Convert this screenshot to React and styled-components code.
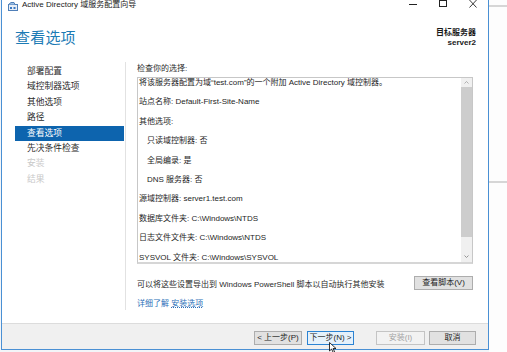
import React from "react";
import styled, { createGlobalStyle } from "styled-components";

const GlobalStyle = createGlobalStyle`
  html, body {
    margin: 0;
    padding: 0;
    background: #fbfbfb;
    overflow: hidden;
  }
  #root {
    width: 507px;
    height: 352px;
  }
`;

const FONT = `"Liberation Sans", "Noto Sans CJK SC", sans-serif`;

const Screen = styled.div`
  position: relative;
  display: flex;
  width: 507px;
  height: 352px;
  background: #f3f5f8;
  font-family: ${FONT};
  color: #1e1e1e;
`;

const Window = styled.div`
  box-sizing: border-box;
  margin-left: 1px;
  width: 488px;
  height: 350px;
  display: flex;
  flex-direction: column;
  background: #ffffff;
  border: 1px solid #4a90d4;
  border-top: none;
`;

const Backdrop = styled.div`
  flex: 1;
  background: #fdfdfd;
  border-top: 2px solid transparent;
  display: flex;
  flex-direction: column;
`;

const BackLine = styled.div`
  height: ${(p) => p.$h}px;
  border-bottom: 2px solid #d6d6d6;
  background: ${(p) => p.$bg || "#fdfdfd"};
`;

const TitleBar = styled.div`
  height: 21px;
  display: flex;
  align-items: flex-start;
  padding-left: 6px;
`;

const TitleText = styled.span`
  font-size: 8px;
  line-height: 10px;
  margin-left: 3px;
  color: #1a1a1a;
  flex: 1;
`;

const Caption = styled.div`
  width: 30px;
  height: 9px;
  display: flex;
  justify-content: center;
  align-items: flex-start;
`;

const Header = styled.div`
  height: 39px;
  display: flex;
  justify-content: space-between;
  padding: 0 12px 0 13px;
`;

const PageTitle = styled.div`
  margin-top: 9px;
  font-size: 15px;
  line-height: 16px;
  color: #1c7bb5;
  letter-spacing: 0.2px;
`;

const Target = styled.div`
  margin-top: 7px;
  text-align: right;
  font-size: 8px;
  line-height: 10px;
  font-weight: bold;
  color: #1a1a1a;
`;

const Body = styled.div`
  height: 263px;
  display: flex;
`;

const Nav = styled.div`
  width: 109px;
  padding: 4px 0 0 13px;
  flex-shrink: 0;
`;

const NavItem = styled.div`
  height: 15.4px;
  line-height: 15.4px;
  padding-left: 12px;
  font-size: 8.75px;
  color: ${(p) => (p.$active ? "#ffffff" : p.$disabled ? "#c9c9c9" : "#2b2b2b")};
  background: ${(p) => (p.$active ? "#0d64ae" : "transparent")};
`;

const Divider = styled.div`
  width: 0;
  margin: 2px 0 13px 1px;
  border-left: 1px solid #e2e2e2;
`;

const Main = styled.div`
  flex: 1;
  display: flex;
  flex-direction: column;
  padding: 0 15px 0 11px;
`;

const Label = styled.div`
  margin-top: 4px;
  font-size: 8px;
  line-height: 10px;
  color: #2b2b2b;
`;

const Box = styled.div`
  margin-top: 3px;
  height: 187px;
  box-sizing: border-box;
  display: flex;
  border: 1px solid #c7c7c7;
  border-bottom: 2px solid #d6d6d6;
  background: #ffffff;
  overflow: hidden;
`;

const Lines = styled.div`
  flex: 1;
  padding-left: 1px;
`;

const Line = styled.div`
  font-size: 8px;
  line-height: 10px;
  height: 10px;
  margin-bottom: 9.4px;
  padding-left: ${(p) => (p.$indent ? 8 : 0)}px;
  white-space: nowrap;
  color: #1e1e1e;
`;

const Scroll = styled.div`
  width: 11px;
  display: flex;
  flex-direction: column;
  background: #f0f0f0;
`;

const Arrow = styled.div`
  height: ${(p) => p.$h}px;
  display: flex;
  justify-content: center;
  align-items: center;
`;

const Thumb = styled.div`
  height: 150px;
  background: #cdcdcd;
`;

const Track = styled.div`
  flex: 1;
`;

const ExportRow = styled.div`
  margin-top: 12px;
  height: 14px;
  display: flex;
  justify-content: space-between;
  align-items: center;
`;

const Note = styled.span`
  font-size: 8px;
  color: #2b2b2b;
`;

const Button = styled.button`
  box-sizing: border-box;
  height: 14px;
  width: ${(p) => p.$w}px;
  margin-left: ${(p) => p.$gap || 0}px;
  padding: 0;
  font-family: ${FONT};
  font-size: 8px;
  line-height: 12px;
  color: ${(p) => (p.$disabled ? "#a3a3a3" : "#1e1e1e")};
  background: ${(p) => (p.$primary ? "#e5f1fb" : p.$disabled ? "#f2f2f2" : "#e1e1e1")};
  border: 1px solid ${(p) => (p.$primary ? "#2b83d3" : p.$disabled ? "#c4c4c4" : "#adadad")};
  border-radius: 0;
`;

const Link = styled.div`
  margin-top: 9px;
  font-size: 8px;
  line-height: 10px;
  color: #2a6fb8;
  span {
    text-decoration: underline dotted;
    text-underline-offset: 1px;
  }
`;

const Footer = styled.div`
  flex: 1;
  display: flex;
  justify-content: flex-end;
  align-items: flex-start;
  padding: 7px 12px 0 0;
  background: #f0f0f0;
  border-top: 1px solid #dcdcdc;
`;

const Pointer = styled.svg`
  position: absolute;
  left: 329px;
  top: 342px;
`;

const AppIcon = () => (
  <svg width="11" height="9" viewBox="0 0 11 9" style={{ marginTop: 2 }}>
    <rect x="0.5" y="2.5" width="9" height="6" fill="#e8eef6" stroke="#4f7fb8" />
    <path d="M0.5 2.5 L3 0.5 L6 0.5 L7 2.5" fill="#9fc0e4" stroke="#4f7fb8" />
    <rect x="2" y="5" width="2" height="2" fill="#3b78c2" />
    <rect x="5.5" y="5" width="2" height="2" fill="#3b78c2" />
  </svg>
);

const navItems = [
  { t: "部署配置" },
  { t: "域控制器选项" },
  { t: "其他选项" },
  { t: "路径" },
  { t: "查看选项", active: true },
  { t: "先决条件检查" },
  { t: "安装", disabled: true },
  { t: "结果", disabled: true },
];

const lines = [
  { t: "将该服务器配置为域“test.com”的一个附加 Active Directory 域控制器。" },
  { t: "站点名称: Default-First-Site-Name" },
  { t: "其他选项:" },
  { t: "只读域控制器: 否", indent: true },
  { t: "全局编录: 是", indent: true },
  { t: "DNS 服务器: 否", indent: true },
  { t: "源域控制器: server1.test.com" },
  { t: "数据库文件夹: C:\\Windows\\NTDS" },
  { t: "日志文件文件夹: C:\\Windows\\NTDS" },
  { t: "SYSVOL 文件夹: C:\\Windows\\SYSVOL" },
];

export default function App() {
  return (
    <>
      <GlobalStyle />
      <Screen>
        <Window>
          <TitleBar>
            <AppIcon />
            <TitleText>Active Directory 域服务配置向导</TitleText>
            <Caption>
              <svg width="8" height="8" viewBox="0 0 8 8">
                <path d="M0 4.5 H8" stroke="#222" strokeWidth="1" />
              </svg>
            </Caption>
            <Caption>
              <svg width="8" height="8" viewBox="0 0 8 8">
                <rect x="0.5" y="0.5" width="7" height="6" fill="none" stroke="#222" />
              </svg>
            </Caption>
            <Caption>
              <svg width="8" height="8" viewBox="0 0 8 8">
                <path d="M0.5 0 L7.5 7.5 M7.5 0 L0.5 7.5" stroke="#222" strokeWidth="0.9" />
              </svg>
            </Caption>
          </TitleBar>
          <Header>
            <PageTitle>查看选项</PageTitle>
            <Target>
              <div>目标服务器</div>
              <div>server2</div>
            </Target>
          </Header>
          <Body>
            <Nav>
              {navItems.map((n) => (
                <NavItem key={n.t} $active={n.active} $disabled={n.disabled}>
                  {n.t}
                </NavItem>
              ))}
            </Nav>
            <Divider />
            <Main>
              <Label>检查你的选择:</Label>
              <Box>
                <Lines>
                  {lines.map((l) => (
                    <Line key={l.t} $indent={l.indent}>
                      {l.t}
                    </Line>
                  ))}
                </Lines>
                <Scroll>
                  <Arrow $h={9}>
                    <svg width="5" height="3" viewBox="0 0 5 3">
                      <path d="M0.5 2.5 L2.5 0.5 L4.5 2.5" fill="none" stroke="#a0a0a0" strokeWidth="0.8" />
                    </svg>
                  </Arrow>
                  <Thumb />
                  <Track />
                  <Arrow $h={11}>
                    <svg width="5" height="3" viewBox="0 0 5 3">
                      <path d="M0.5 0.5 L2.5 2.5 L4.5 0.5" fill="none" stroke="#8a8a8a" strokeWidth="0.9" />
                    </svg>
                  </Arrow>
                </Scroll>
              </Box>
              <ExportRow>
                <Note>可以将这些设置导出到 Windows PowerShell 脚本以自动执行其他安装</Note>
                <Button $w={59}>查看脚本(V)</Button>
              </ExportRow>
              <Link>
                详细了解 <span>安装选项</span>
              </Link>
            </Main>
          </Body>
          <Footer>
            <Button $w={48}>&lt; 上一步(P)</Button>
            <Button $w={47} $gap={5} $primary>
              下一步(N) &gt;
            </Button>
            <Button $w={49} $gap={22} $disabled>
              安装(I)
            </Button>
            <Button $w={47} $gap={4}>
              取消
            </Button>
          </Footer>
        </Window>
        <Backdrop>
          <BackLine $h={3} />
          <BackLine $h={174} />
          <Track />
        </Backdrop>
        <Pointer width="8" height="11" viewBox="0 0 8 11">
          <path d="M0.5 0.5 L0.5 9 L2.6 7 L4.2 10.5 L5.6 9.9 L4.1 6.5 L7 6.5 Z" fill="#ffffff" stroke="#000" strokeWidth="0.8" />
        </Pointer>
      </Screen>
    </>
  );
}
